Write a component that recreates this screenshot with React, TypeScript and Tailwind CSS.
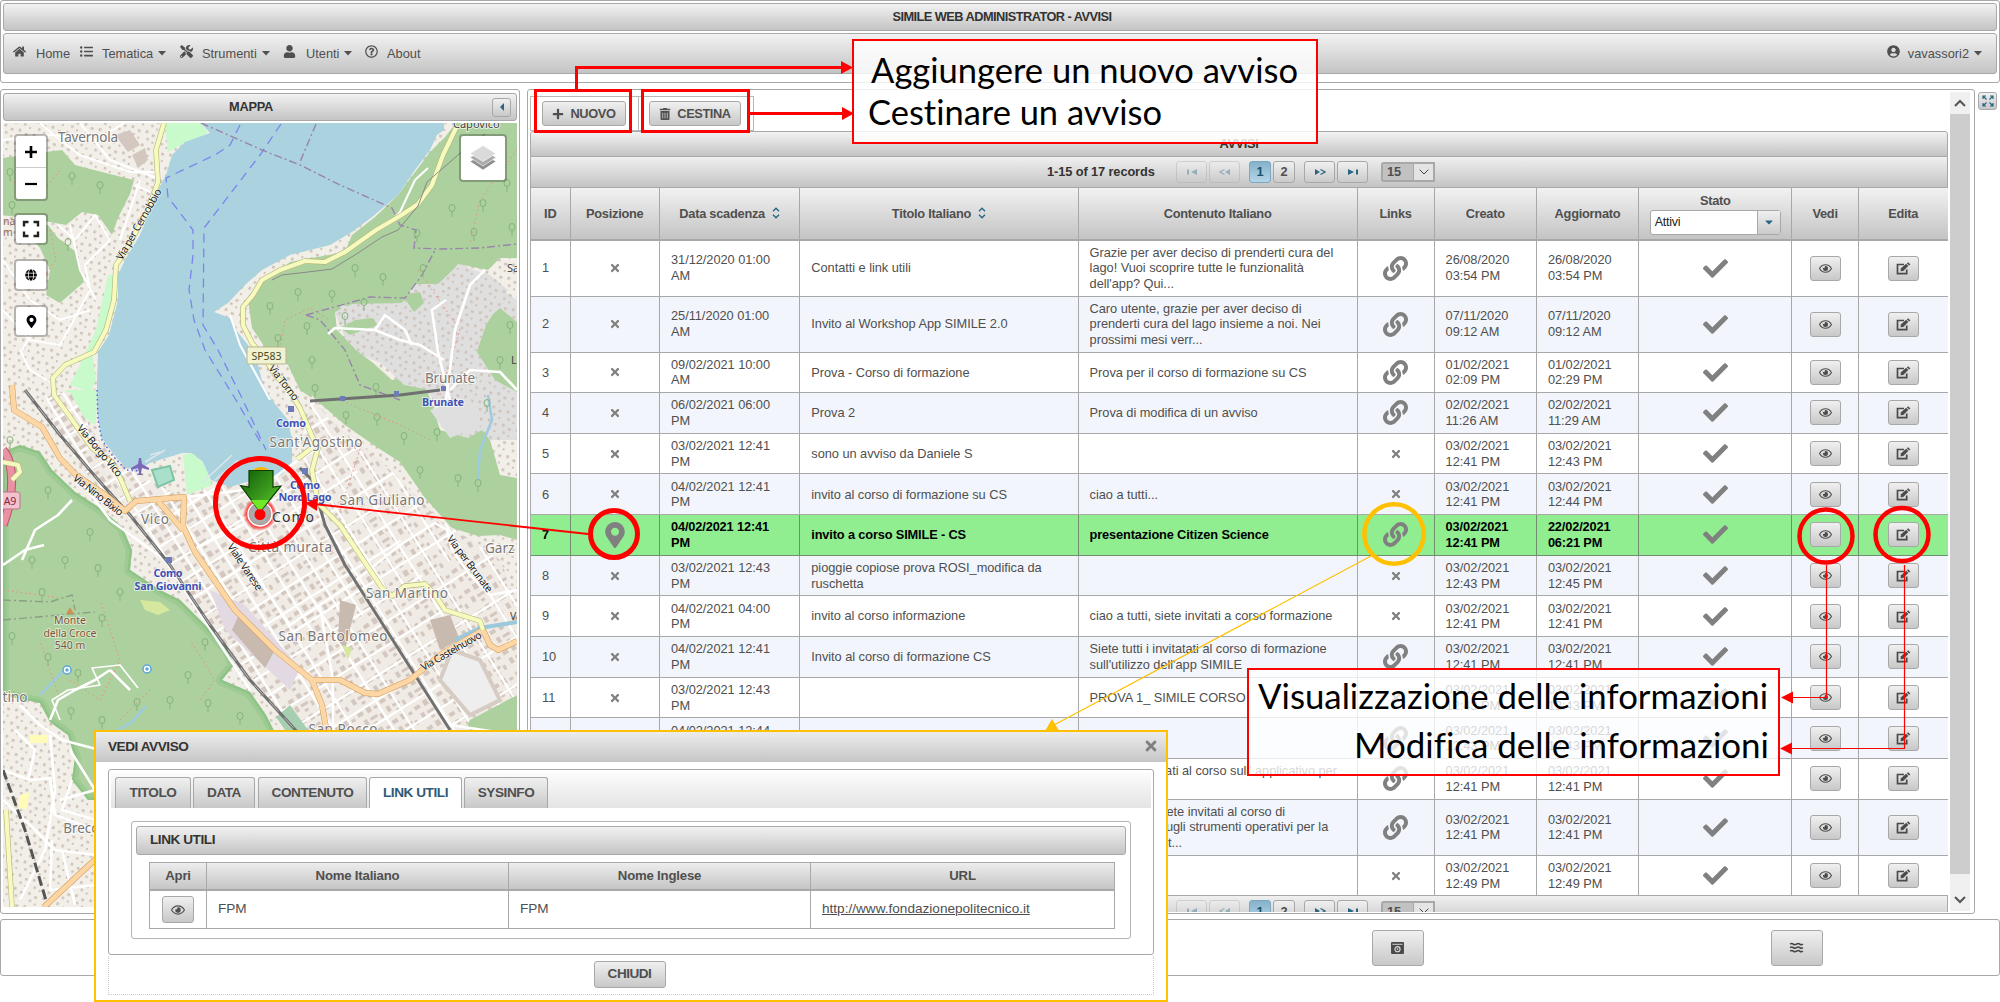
import React from "react";
import {
  FaHome, FaListUl, FaTools, FaUser, FaRegQuestionCircle, FaUserCircle, FaPlus, FaTrashAlt,
  FaLink, FaCheck, FaTimes, FaRegEye, FaMapMarkerAlt, FaCaretDown, FaGlobe,
} from "react-icons/fa";

const BAR = "border border-[#a8a8a8] bg-gradient-to-b from-[#f2f2f2] to-[#c4c4c4]";
const BTN = "border border-[#a8a8a8] bg-gradient-to-b from-[#f0f0f0] to-[#c8c8c8] rounded-[3px] flex items-center justify-center text-[#4f4f4f]";
const COLS = "grid grid-cols-[39.5px_89.5px_140.3px_278.3px_279px_77px_102.3px_102.2px_153.4px_66.2px_90px]";

type Row = {
  id: number; scad: string[]; tit?: string[]; cont?: string[]; link?: boolean;
  cre: string[]; agg: string[]; tall?: boolean; sel?: boolean;
};

const rows: Row[] = [
  { id: 1, scad: ["31/12/2020 01:00", "AM"], tit: ["Contatti e link utili"], cont: ["Grazie per aver deciso di prenderti cura del", "lago! Vuoi scoprire tutte le funzionalità", "dell'app? Qui..."], link: true, cre: ["26/08/2020", "03:54 PM"], agg: ["26/08/2020", "03:54 PM"], tall: true },
  { id: 2, scad: ["25/11/2020 01:00", "AM"], tit: ["Invito al Workshop App SIMILE 2.0"], cont: ["Caro utente, grazie per aver deciso di", "prenderti cura del lago insieme a noi. Nei", "prossimi mesi verr..."], link: true, cre: ["07/11/2020", "09:12 AM"], agg: ["07/11/2020", "09:12 AM"], tall: true },
  { id: 3, scad: ["09/02/2021 10:00", "AM"], tit: ["Prova - Corso di formazione"], cont: ["Prova per il corso di formazione su CS"], link: true, cre: ["01/02/2021", "02:09 PM"], agg: ["01/02/2021", "02:29 PM"] },
  { id: 4, scad: ["06/02/2021 06:00", "PM"], tit: ["Prova 2"], cont: ["Prova di modifica di un avviso"], link: true, cre: ["02/02/2021", "11:26 AM"], agg: ["02/02/2021", "11:29 AM"] },
  { id: 5, scad: ["03/02/2021 12:41", "PM"], tit: ["sono un avviso da Daniele S"], cre: ["03/02/2021", "12:41 PM"], agg: ["03/02/2021", "12:43 PM"] },
  { id: 6, scad: ["04/02/2021 12:41", "PM"], tit: ["invito al corso di formazione su CS"], cont: ["ciao a tutti..."], cre: ["03/02/2021", "12:41 PM"], agg: ["03/02/2021", "12:44 PM"] },
  { id: 7, scad: ["04/02/2021 12:41", "PM"], tit: ["invito a corso SIMILE - CS"], cont: ["presentazione Citizen Science"], link: true, cre: ["03/02/2021", "12:41 PM"], agg: ["22/02/2021", "06:21 PM"], sel: true },
  { id: 8, scad: ["03/02/2021 12:43", "PM"], tit: ["pioggie copiose prova ROSI_modifica da", "ruschetta"], cre: ["03/02/2021", "12:43 PM"], agg: ["03/02/2021", "12:45 PM"] },
  { id: 9, scad: ["04/02/2021 04:00", "PM"], tit: ["invito al corso informazione"], cont: ["ciao a tutti, siete invitati a corso formazione"], cre: ["03/02/2021", "12:41 PM"], agg: ["03/02/2021", "12:41 PM"] },
  { id: 10, scad: ["04/02/2021 12:41", "PM"], tit: ["Invito al corso di formazione CS"], cont: ["Siete tutti i invitatati al corso di formazione", "sull'utilizzo dell'app SIMILE"], link: true, cre: ["03/02/2021", "12:41 PM"], agg: ["03/02/2021", "12:41 PM"] },
  { id: 11, scad: ["03/02/2021 12:43", "PM"], cont: ["PROVA 1_ SIMILE CORSO"], cre: ["03/02/2021", "12:43 PM"], agg: ["03/02/2021", "12:43 PM"] },
  { id: 12, scad: ["04/02/2021 12:44", "PM"], link: true, cre: ["03/02/2021", "12:43 PM"], agg: ["03/02/2021", "12:43 PM"] },
  { id: 13, scad: ["04/02/2021 12:41", "PM"], cont: ["Siete già invitati al corso sull' applicativo per", "\u00a0"], link: true, cre: ["03/02/2021", "12:41 PM"], agg: ["03/02/2021", "12:41 PM"] },
  { id: 14, scad: ["04/02/2021 12:41", "PM"], cont: ["Ciao a tutti, siete invitati al corso di", "formazione, sugli strumenti operativi per la", "gestione dei st..."], link: true, cre: ["03/02/2021", "12:41 PM"], agg: ["03/02/2021", "12:41 PM"], tall: true },
  { id: 15, scad: ["04/02/2021 12:49", "PM"], cre: ["03/02/2021", "12:49 PM"], agg: ["03/02/2021", "12:49 PM"] },
];

function Lines({ t }: { t?: string[] }) {
  return <div className="whitespace-nowrap">{(t || []).map((l, i) => <div key={i}>{l}</div>)}</div>;
}

function Cell({ children, center, sel }: { children?: React.ReactNode; center?: boolean; sel?: boolean }) {
  return (
    <div className={"flex items-center border-b border-r overflow-hidden " + (sel ? "border-[#6f8f6f] " : "border-[#a8a8a8] ") + (center ? "justify-center" : "pl-[11px]")}>
      {children}
    </div>
  );
}

const X = () => <FaTimes className="text-[12px] text-[#808080]" />;

function EditIcon() {
  return (
    <svg width="15" height="13" viewBox="0 0 15 13">
      <path d="M8 2.500H1.500V11.700H10.700V7.500" fill="none" stroke="#4a4a4a" strokeWidth="1.700" />
      <path d="M4.500 9.300L5 6.300L10.200 1.800L12.300 4.100L7.200 8.900Z" fill="#4a4a4a" />
      <path d="M10.900 1.200L12.200 .2L14.300 2.400L13 3.500Z" fill="#4a4a4a" />
    </svg>
  );
}

function TableRow({ r, i }: { r: Row; i: number }) {
  const bg = r.sel ? "bg-[#90ee90] font-bold text-black tracking-[-0.150px] " : i % 2 ? "bg-[#f2f5fb] tracking-[-0.040px] " : "bg-white tracking-[-0.040px] ";
  return (
    <div className={COLS + " leading-[15.6px] " + bg + (r.tall ? "h-[56px]" : "h-[40.66px]")}>
      <Cell sel={r.sel}>{r.id}</Cell>
      <Cell center sel={r.sel}>{r.sel ? <FaMapMarkerAlt className="text-[26px] text-[#808080]" /> : <X />}</Cell>
      <Cell sel={r.sel}><Lines t={r.scad} /></Cell>
      <Cell sel={r.sel}><Lines t={r.tit} /></Cell>
      <Cell sel={r.sel}><Lines t={r.cont} /></Cell>
      <Cell center sel={r.sel}>{r.link ? <FaLink className="text-[25px] text-[#808080]" /> : <X />}</Cell>
      <Cell sel={r.sel}><Lines t={r.cre} /></Cell>
      <Cell sel={r.sel}><Lines t={r.agg} /></Cell>
      <Cell center sel={r.sel}><FaCheck className="text-[25px] text-[#808080]" /></Cell>
      <Cell center sel={r.sel}><div className={BTN + " h-[25px] w-[31px]"}><FaRegEye className="text-[13px]" /></div></Cell>
      <Cell center sel={r.sel}><div className={BTN + " h-[25px] w-[31px]"}><EditIcon /></div></Cell>
    </div>
  );
}

function Paginator() {
  const b = "flex h-[22px] items-center justify-center rounded-[3px] border border-[#a8a8a8] bg-gradient-to-b from-[#f0f0f0] to-[#cbcbcb] ";
  return (
    <div className="flex h-[31px] shrink-0 items-center border-x border-b border-[#a8a8a8] bg-gradient-to-b from-[#f0f0f0] to-[#c4c4c4] pl-[516px] font-bold text-[#4f4f4f]">
      <span className="w-[129px] whitespace-nowrap tracking-[-0.100px] text-[#333]">1-15 of 17 records</span>
      <div className={b + "w-[31px] opacity-40"}><svg width="12" height="8" viewBox="0 0 12 8"><path d="M1 1.500h2v5H1zM11 1v6L5 4z" fill="#2e6e8e" /></svg></div>
      <div className={b + "ml-[2px] w-[31px] opacity-40"}><svg width="12" height="8" viewBox="0 0 12 8"><path d="M11 1v6L6 4z" fill="#2e6e8e" /><path d="M5.500 1.500L1 4l4.500 2.500" fill="none" stroke="#2e6e8e" strokeWidth="1.200" /></svg></div>
      <div className="ml-[9px] flex h-[22px] w-[22px] items-center justify-center rounded-[3px] border border-[#7ba7bf] bg-gradient-to-b from-[#85b2cb] to-[#b4d5e7] text-[#1d4f6b]">1</div>
      <div className={b + "ml-[2px] w-[22px]"}>2</div>
      <div className={b + "ml-[9px] w-[31px]"}><svg width="12" height="8" viewBox="0 0 12 8"><path d="M1 1v6l5-3z" fill="#2a6582" /><path d="M6.500 1.500L11 4L6.500 6.500" fill="none" stroke="#2a6582" strokeWidth="1.200" /></svg></div>
      <div className={b + "ml-[2px] w-[31px]"}><svg width="12" height="8" viewBox="0 0 12 8"><path d="M9 1.500h2v5H9zM1 1v6l6-3z" fill="#2a6582" /></svg></div>
      <div className="ml-[13px] flex h-[20px] w-[54px] items-center rounded-l-[3px] border-2 border-[#a8a8a8] bg-[#c2c2c2] pl-[4px]">
        <span className="w-[26px]">15</span>
        <div className="flex h-[16px] w-[20px] items-center justify-center border-l border-[#a8a8a8] bg-[#e4e4e4]">
          <svg width="10" height="6" viewBox="0 0 10 6"><path d="M.7.7L5 5L9.300.7" fill="none" stroke="#444" /></svg>
        </div>
      </div>
    </div>
  );
}

function Sort() {
  return <svg className="ml-[7px]" width="8" height="12" viewBox="0 0 8 12"><path d="M1 4.300L4 1.300L7 4.300M1 7.700L4 10.700L7 7.700" fill="none" stroke="#2a6582" strokeWidth="1.400" /></svg>;
}

function HeaderRow() {
  const names = ["ID", "Posizione", "Data scadenza", "Titolo Italiano", "Contenuto Italiano", "Links", "Creato", "Aggiornato", "Stato", "Vedi", "Edita"];
  return (
    <div className={COLS + " h-[52.500px] shrink-0 bg-gradient-to-b from-[#f2f2f2] to-[#c2c2c2] font-bold tracking-[-0.250px] text-[#4f4f4f]"}>
      {names.map((n, i) => (
        <div key={n} className="flex flex-col items-center justify-center border-r border-b-2 border-[#a8a8a8]">
          <div className={"flex items-center whitespace-nowrap" + (n === "Stato" ? " h-[18px]" : "")}>{n}{(i === 2 || i === 3) && <Sort />}</div>
          {n === "Stato" && (
            <div className="flex h-[25px] w-[131px] rounded-[3px] border border-[#a8a8a8] bg-white font-normal text-[#222]">
              <span className="w-[106px] pl-[4px] pt-[2px] text-[12.500px]">Attivi</span>
              <span className="flex flex-1 items-center justify-center border-l border-[#a8a8a8] bg-gradient-to-b from-[#f0f0f0] to-[#cbcbcb]"><FaCaretDown className="text-[12px] text-[#2a6582]" /></span>
            </div>
          )}
        </div>
      ))}
    </div>
  );
}

const LAKE = "M201 123L210 133L185 142L172 155L166 175L158 190L152 205L140 235L126 258L118 275L118 300L109 335L98 352L97 382L97 410L101 437L112 452L126 468L138 470L150 463L182 453L192 453L203 462L211 480L230 487L247 482L282 475L292 462L292 440L288 420L272 400L263 385L258 365L248 345L236 330L230 318L214 312L228 303L246 284L262 270L290 255L330 245L352 232L372 217L398 195L415 170L430 150L437 135L444 130V123Z";
const FOREST = [
  "M3 158L45 152L62 150L75 165L98 171L134 180L130 194L118 218L112 235L98 215L82 212L66 225L50 222L3 215Z",
  "M22 226L48 225L58 238L76 252L84 282L60 303L46 295L50 270L40 248Z",
  "M430 152L445 137L456 123H517V258L500 258L488 270L458 264L440 285L415 284L402 303L352 304L335 312L337 330L356 350L372 362L392 380L420 375L430 398L440 430L468 438L482 430L490 440L500 475L517 478V540L500 535L478 536L452 528L425 498L400 462L378 448L345 425L322 405L300 390L288 365L270 355L252 328L248 300L262 283L290 262L345 252L352 235L375 217L398 195Z",
  "M480 325L500 308L517 322V392L495 380L477 352Z",
  "M3 452L20 445L40 452L52 470L75 492L100 508L122 527L132 550L130 570L160 590L180 600L205 625L228 650L234 665L222 680L250 692L266 715L276 735L290 760V800L88 800L72 780L75 758L68 735L50 722L40 703L3 695Z",
  "M466 720L490 700L517 695V760L480 760Z",
];
const PARK = ["M165 123H201L208 133L185 143L168 152Z", "M108 275L116 275L112 310L104 338L92 352L96 380L90 392L70 385L80 365L96 330Z", "M65 390H97L96 425L80 415Z", "M183 455L192 453L205 465L212 485L187 495Z", "M165 545L185 540L195 555L190 568L175 560Z", "M330 450L345 470L330 475Z"];
const CITY = "M97 440L112 455L135 472L180 497L210 488L260 482L298 458L312 395L330 420L380 460L410 490L440 520L500 560L517 600V695L470 720L440 760L320 760L270 700L200 612L150 540L100 490L60 440L45 395L70 392Z";
const YELLOW = [
  "M164 123L156 150L158 182L148 210L125 252L116 265L114 300L106 330L94 352L65 365L53 378L54 395L68 414L92 448L112 462L121 480L130 501",
  "M456 128L443 155L432 185L418 204L400 216L376 230L345 252L325 262L305 261L280 270L262 280L253 295L243 307L243 325L252 343L264 357L275 375L288 388L300 408L312 436L318 448L312 470L318 503L340 525L360 555L382 588L392 596L405 586L425 584L436 596L445 610L480 621L483 630",
  "M297 459L312 448", "M3 462L18 465L20 472L12 480",
  "M6 810L12 907",
];
const ORANGE = ["M12 385L14 410L42 427L60 458L76 475L104 494L125 511L136 501L184 497L183 526L195 552L235 610L275 650L312 680L340 680L365 693L378 694L410 680L440 655L483 630L490 645L498 650L517 641", "M312 680L322 705L328 740", "M158 501L183 530", "M44 907L100 855"];
const WHITE = ["M186 497L260 488L298 460", "M195 549L262 515", "M222 530L245 560L290 625L350 585L400 545L435 523L447 530L452 550L470 575L490 595L517 590", "M320 607L333 680V740", "M415 675L450 725L517 735", "M50 440L110 520L165 560L250 690", "M450 400L438 352L432 310L446 300M446 400L455 330L470 285L485 270M444 360L420 345L400 340L375 330L335 328L328 334M375 330L385 315L405 330L412 345", "M450 390L470 370L500 372L517 390", "M22 560L35 530L58 515L72 500", "M3 565L25 550L44 545", "M50 720L58 700L75 690L95 680L110 670M110 670L130 690", "M20 705L40 725L62 740L100 750M50 735L55 790L45 850L20 900M3 800L30 825L55 850L96 855M70 750L95 790L60 800", "M3 770L30 780L50 778L55 815L96 830M28 780L35 750L15 730M52 840L50 890L96 885M62 850L75 905M72 780L62 810L96 820"];
const RAIL = ["M25 390L60 435L100 482L130 515L170 565L210 625L250 680L300 735", "M300 468L312 480L325 525L345 565L380 620L415 675L450 730", "M310 401L400 395L440 390"];

const TREES = [[72, 176], [100, 185], [10, 172], [12, 205], [68, 242], [452, 208], [483, 203], [474, 232], [417, 233], [507, 183], [512, 227], [423, 268], [383, 277], [355, 268], [332, 294], [298, 292], [270, 306], [307, 326], [345, 316], [278, 338], [312, 360], [364, 302], [510, 325], [500, 360], [376, 387], [315, 388], [346, 415], [377, 417], [404, 436], [437, 432], [487, 403], [420, 470], [458, 478], [478, 483], [10, 440], [48, 490], [90, 532], [32, 560], [65, 560], [98, 568], [42, 592], [120, 592], [12, 636], [48, 657], [78, 673], [102, 618], [188, 675], [205, 642], [137, 702], [170, 700], [208, 703], [71, 711], [240, 716], [102, 720]];

const STREETS = Array.from({ length: 42 }, (_, i) => -360 + i * 17);

function LakeMap() {
  const lab = (x: number, y: number, t: string, w?: number) => (
    <text x={x} y={y} textAnchor="middle" fontSize="13.500" fill="#777" stroke="#fff" strokeWidth="2" strokeOpacity=".75" paintOrder="stroke" textLength={w}>{t}</text>
  );
  const blue = (x: number, y: number, t: string, w?: number) => (
    <text x={x} y={y} textAnchor="middle" fontSize="10.800" fontWeight="700" fill="#4150b5" stroke="#fff" strokeWidth="2" strokeOpacity=".6" paintOrder="stroke" textLength={w}>{t}</text>
  );
  const road = (x: number, y: number, a: number, t: string, w?: number) => (
    <text transform={`translate(${x} ${y}) rotate(${a})`} textAnchor="middle" fontSize="10.500" fill="#222" stroke="#fff" strokeWidth="1.500" strokeOpacity=".6" paintOrder="stroke" textLength={w}>{t}</text>
  );
  return (
    <svg width="514" height="784" viewBox="3 123 514 784" fontFamily="'Noto Sans', sans-serif" className="block">
      <defs>
        <pattern id="bld" width="26" height="24" patternUnits="userSpaceOnUse" patternTransform="rotate(-32)">
          <path d="M2 3h6v4H2zM12 2h5v6h-5zM20 5h4v3h-4zM4 12h4v6H4zM11 13h8v3h-8zM21 15h3v5h-3zM12 19h4v3h-4z" fill="#d3c7bf" />
        </pattern>
        <pattern id="sm" width="15" height="14" patternUnits="userSpaceOnUse" patternTransform="rotate(20)">
          <path d="M2 2h2.500v3H2zM9 4h3v2.500H9zM5 9h2.500v2.500H5zM11 11h2v2h-2z" fill="#cfc3ba" />
        </pattern>
        <clipPath id="city"><path d={CITY} /></clipPath>
        <clipPath id="southwest"><path d={FOREST[4]} /></clipPath>
        <radialGradient id="glow"><stop offset=".5" stopColor="#888" stopOpacity=".6" /><stop offset=".75" stopColor="#ff3030" /><stop offset="1" stopColor="#ff3030" stopOpacity="0" /></radialGradient>
        <linearGradient id="grn" x1="0" y1="0" x2="1" y2="1"><stop offset="0" stopColor="#0e5c06" /><stop offset=".6" stopColor="#3f9f1f" /><stop offset="1" stopColor="#5fe020" /></linearGradient>
      </defs>
      <rect x="3" y="123" width="514" height="784" fill="#f2efe9" />
      <rect x="3" y="123" width="514" height="784" fill="url(#sm)" />
      <path d="M330 300H420L460 262L517 300V440L460 440L420 380L350 350Z" fill="#e0dfdf" />
      <path d="M330 300H420L460 262L517 300V440L460 440L420 380L350 350Z" fill="url(#sm)" />
      {FOREST.map((d) => <path key={d} d={d} fill="#add19e" />)}
      <g clipPath="url(#southwest)" fill="none" stroke="#8fc487" strokeLinejoin="round">
        <path d={FOREST[4]} strokeWidth="12" strokeOpacity=".5" />
        <path d={FOREST[4]} strokeWidth="5" />
      </g>
      <path d="M340 304L352 308L368 318L392 306L402 303L416 284L438 284L458 265L490 275L508 290L486 325L474 360L452 398L430 390L404 385L380 362L372 340L345 330Z" fill="#e0dfdf" />
      <path d="M340 304L352 308L368 318L392 306L402 303L416 284L438 284L458 265L490 275L508 290L486 325L474 360L452 398L430 390L404 385L380 362L372 340L345 330Z" fill="url(#sm)" />
      <path d="M355 320L372 318L378 325L350 335L340 328Z M402 295L420 292L424 303L414 312Z" fill="#add19e" />
      {PARK.map((d) => <path key={d} d={d} fill="#c8facc" />)}
      <path d="M430 410L470 398L482 425L450 438Z" fill="#e0dfdf" />
      <g clipPath="url(#city)">
        <rect x="3" y="380" width="514" height="400" fill="#f0ebe4" />
        <rect x="3" y="380" width="514" height="400" fill="url(#bld)" />
        <g transform="translate(290 590) rotate(-32)" stroke="#fff" strokeWidth="2.200">
          {STREETS.map((v, i) => <g key={v}><path d={`M${v} -340V${i % 3 ? 340 : 60}`} /><path d={`M-360 ${v * 1.2}H${i % 2 ? 360 : 120}`} /></g>)}
        </g>
        <path d="M210 590L245 605L300 668L290 690L225 630Z" fill="#e3d9e3" />
        <path d="M240 612L275 650L265 668L232 630Z M250 600L282 640M340 600L356 605L345 650L338 640Z M430 620L450 615L460 640L440 650Z" fill="#c9bab0" />
        <path d="M452 650L480 660L500 700L470 715L440 680Z" fill="#eeeeee" stroke="#d6ccc4" strokeWidth="4" />
      </g>
      <path d="M115 135L130 130L140 145L128 152Z M132 155L145 148L148 160L138 168Z" fill="#d3c7bf" />
      <path d="M152 470L170 466L174 480L158 487Z" fill="#aae0cb" stroke="#7cc6a4" strokeWidth="2" />
      <path d="M276 717L290 705L308 730V740H292Z" fill="#a5cfb0" />
      <path d="M140 600L160 602L170 610L158 615L145 610Z M342 645L352 648L348 660Z" fill="#d6e8a0" />
      <path d="M30 735h18v8H30zM20 795l10 -3l-4 18l-8 -3z" fill="#fffbb8" />
      <path d={LAKE} fill="#aad3df" />
      <path d="M202 483L232 455M215 480L238 460M145 462L165 450M150 455L160 452" stroke="#dce6ea" strokeWidth="1.500" />
      <g fill="none" stroke="#7b85ee" strokeWidth="1.300" strokeDasharray="9 6">
        <path d="M240 125L230 145L215 155L166 178L168 197L193 230L193 255L189 290L194 320L205 350L236 400L262 445" />
        <path d="M281 124L260 155L204 228L203 325L218 350L242 398L266 450" />
      </g>
      <path d="M97 390L98 420L102 440L112 455L126 470L140 471" fill="none" stroke="#5a66e0" strokeWidth="1.500" strokeDasharray="1.500 3" />
      <g fill="none" stroke="#9a83ad" strokeWidth="1.400" strokeDasharray="8 3 2 3">
        <path d="M201 123L262 150L300 165L340 185L392 208L400 225L416 230L414 248L440 249L480 248L517 244M316 124L300 162" />
        <path d="M306 315L320 320L345 350L360 385L400 400M306 315L370 297L405 298L422 275L435 250" />
        <path d="M3 600L50 602L72 595L75 610M3 620L60 615L95 612" stroke="#8c9f86" />
      </g>
      <g fill="none" stroke="#f08a80" strokeWidth="1" strokeDasharray="1.500 3">
        <path d="M10 180L40 195L60 170M50 230L56 260L45 275M275 380L285 320L310 308L330 320M440 395L460 330L418 270M517 150L480 200L470 245M340 510L360 450L330 440M70 680L100 700L120 660L100 600M150 690L120 720M60 700L40 640M3 590L60 598M200 700L215 680L190 640M430 440L400 425L340 400" />
      </g>
      <path d="M488 395L492 420L480 450L478 480M118 730L132 722L146 706M40 695L66 668" fill="none" stroke="#9ccbe0" strokeWidth="2.500" />
      <path d="M455 640L480 628L517 622" fill="none" stroke="#9cc8dc" strokeWidth="4" />
      {TREES.map(([x, y]) => <path key={x + "-" + y} d={`M${x} ${y + 3}v6M${x - 3} ${y}a3 3.500 0 1 0 6 0a3 3.500 0 1 0 -6 0`} fill="none" stroke="#86b37a" strokeWidth="1" />)}
      <path d="M3 450C14 462 15 495 3 525" fill="none" stroke="#c0506b" strokeWidth="9" />
      <path d="M3 450C14 462 15 495 3 525" fill="none" stroke="#e892a2" strokeWidth="7" />
      <g fill="none" stroke="#fff" strokeWidth="2.600" strokeLinejoin="round">
        {WHITE.map((d) => <path key={d} d={d} />)}
        <path strokeWidth="2" d="M40 123L60 140L80 155L130 172L156 172M80 123L110 160L156 178M3 140L50 135L95 140L125 123M3 260L30 300L60 320L90 310M58 225L75 240L95 215L110 240L85 265L90 290L60 345L30 340L3 310M70 225L80 270L96 300M140 180L120 240M135 185L150 192M20 350L30 370L50 382M22 350L45 310M388 225L400 212L415 180L428 168M230 315L240 345L270 400" />
        <path strokeWidth="1.600" d="M60 720L52 700L68 690L100 685L92 668L120 665L138 688" />
      </g>
      <g fill="none" strokeLinejoin="round">
        {RAIL.map((d) => <path key={d} d={d} stroke="#707070" strokeWidth="3" />)}
        <path d={RAIL[0]} stroke="#bbb" strokeWidth="1" strokeDasharray="14 8" />
        <path d="M3 770L25 830L48 907" stroke="#555" strokeWidth="3" strokeDasharray="10 4" />
        {ORANGE.map((d) => <path key={d} d={d} stroke="#d09a55" strokeWidth="6" />)}
        {ORANGE.map((d) => <path key={d} d={d} stroke="#fcd6a4" strokeWidth="5" />)}
        {YELLOW.map((d) => <path key={d} d={d} stroke="#b5b678" strokeWidth="5.400" />)}
        {YELLOW.map((d) => <path key={d} d={d} stroke="#f7fabf" strokeWidth="4.200" />)}
      </g>
      <path d="M485 134L458 155L427 182L418 206L398 230L382 237L358 253L332 269L308 272L282 275L272 280" fill="none" stroke="#888" strokeWidth="1" />
      <g fill="#6d7bb8"><path d="M441 386h5v5h-5zM340 396h5v5h-5zM394 391h5v5h-5zM288 406h6v6h-6zM302 468h6v6h-6zM166 557h6v6h-6z" /></g>
      <path d="M139 458l2 0 1 6 7 4v2l-7-2-1 5 2 2h-6l2-2-1-5-7 2v-2l7-4z" fill="#7b68b8" />
      <path d="M70 607l4 7h-8z" fill="#d08f55" />
      <g fill="#fff" stroke="#5aa5d8" strokeWidth="1.500"><circle cx="67" cy="670" r="4" /><circle cx="147" cy="669" r="4" /><circle cx="67" cy="670" r="1" /><circle cx="147" cy="669" r="1" /></g>
      {lab(88, 142, "Tavernola", 60)}
      {lab(450, 383, "Brunate", 50)}
      {lab(316, 447, "Sant'Agostino", 93)}
      {lab(382, 505, "San Giuliano", 85)}
      {lab(155, 524, "Vico", 28)}
      {lab(290, 552, "Città murata", 84)}
      {lab(407, 598, "San Martino", 82)}
      {lab(333, 641, "San Bartolomeo", 109)}
      {lab(343, 734, "San Rocco", 69)}
      <text x="485" y="553" fontSize="13.500" fill="#777" stroke="#fff" strokeWidth="2" strokeOpacity=".75" paintOrder="stroke">Garz</text>
      {lab(15, 702, "tino")}
      {lab(86, 833, "Breccia")}
      <text x="453" y="128" fontSize="11" fill="#444" stroke="#fff" strokeWidth="2" strokeOpacity=".7" paintOrder="stroke">Capovico</text>
      <text x="507" y="272" fontSize="11" fill="#444">Sa</text>
      <text x="511" y="364" fontSize="11" fill="#444">La</text>
      <text x="510" y="620" fontSize="10.500" fill="#444">Va</text>
      <text x="3" y="225" fontSize="10.500" fill="#9a6a4a">na</text><text x="3" y="236" fontSize="10.500" fill="#9a6a4a">m</text>
      <g fontSize="10.500" fill="#7d5540" textAnchor="middle" stroke="#fff" strokeWidth="1.800" strokeOpacity=".5" paintOrder="stroke"><text x="70" y="624">Monte</text><text x="70" y="637" textLength="53">della Croce</text><text x="70" y="649">540 m</text></g>
      {blue(291, 427, "Como", 30)}{blue(305, 489, "Como", 30)}{blue(305, 501, "Nord Lago", 53)}
      {blue(168, 577, "Como", 29)}{blue(168, 590, "San Giovanni", 67)}{blue(443, 406, "Brunate", 42)}
      {road(142, 226, -60, "Via per Cernobbio", 80)}
      {road(281, 385, 52, "Via Torno", 42)}
      {road(97, 453, 50, "Via Borgo Vico", 64)}
      {road(96, 498, 38, "Via Nino Bixio", 60)}
      {road(242, 569, 56, "Viale Varese", 54)}
      {road(467, 566, 53, "Via per Brunate", 68)}
      {road(453, 654, -30, "Via Castelnuovo", 68)}
      <rect x="247" y="347" width="39" height="17" rx="1.500" fill="#f0f2d0" stroke="#b5b58a" /><text x="266.500" y="359.500" fontSize="10.500" fill="#4a4a20" textAnchor="middle">SP583</text>
      <rect x="0" y="492" width="20" height="17" rx="2" fill="#f3c3cd" stroke="#c0708a" /><text x="10" y="504.500" fontSize="10.500" fill="#8a2040" textAnchor="middle">A9</text>
      <circle cx="260" cy="514" r="17" fill="url(#glow)" />
      <circle cx="260" cy="514" r="12" fill="#aaa" fillOpacity=".75" stroke="#fff" strokeWidth="1.500" />
      <text x="293" y="522" textAnchor="middle" fontSize="14" fill="#333" stroke="#fff" strokeWidth="2" strokeOpacity=".6" paintOrder="stroke" textLength="42">Como</text>
      <ellipse cx="261" cy="473" rx="9" ry="6" fill="#ffb400" />
      <path d="M249 470.500H273V487L281 486L260 512L240.500 485.500L249 487Z" fill="url(#grn)" stroke="#0b3d05" strokeWidth="1.200" />
      <path d="M251 500H269L260 512Z" fill="#6fe826" />
      <circle cx="260" cy="514.500" r="5.500" fill="red" />
    </svg>
  );
}

const CTRL = "flex h-[32px] w-[34px] items-center justify-center rounded-[4px] border-2 border-black/25 bg-white bg-clip-padding text-black";

function Menu({ w, icon, label, caret, tx }: { w: string; icon: React.ReactNode; label: string; caret?: boolean; tx: string }) {
  return (
    <div className={"flex items-center " + w}>
      <span className={"-mt-[4px] text-[13px] " + tx}>{icon}</span>
      <span className="whitespace-nowrap">{label}</span>
      {caret && <svg className="ml-[5px]" width="8" height="5" viewBox="0 0 8 5"><path d="M0 0H8L4 4.500Z" fill="#4f4f4f" /></svg>}
    </div>
  );
}

function Tab({ w, on, children }: { w: string; on?: boolean; children: string }) {
  return (
    <div className={"flex h-[31px] items-center justify-center rounded-t-[3px] border border-b-0 border-[#a8a8a8] text-[13.600px] tracking-[-0.450px] font-bold " + w + (on ? " bg-white text-[#2e5a77]" : " bg-gradient-to-b from-[#f0f0f0] to-[#c8c8c8] text-[#4f4f4f]")}>{children}</div>
  );
}

function Dialog() {
  const th = "flex items-center justify-center border-r border-[#a8a8a8]";
  return (
    <div className="absolute left-[94px] top-[730px] h-[272px] w-[1074px] border-2 border-[#ffc000] bg-white text-[13.600px]">
      <div className="flex h-[30px] items-center justify-between bg-gradient-to-b from-[#ececec] to-[#c6c6c6] pl-[12px] pr-[7px] font-bold text-[#333]">
        <span className="tracking-[-0.450px]">VEDI AVVISO</span>
        <FaTimes className="-mt-[2px] text-[16px] text-[#808080]" />
      </div>
      <div className="ml-[12px] mt-[7px] h-[186px] w-[1046px] rounded-[3px] border border-[#a8a8a8] p-[2px]">
        <div className="flex h-[36px] items-end bg-gradient-to-b from-[#fcfcfc] to-[#e4e4e4] pl-[4px]">
          <Tab w="w-[76px]">TITOLO</Tab>
          <Tab w="ml-[2px] w-[62px]">DATA</Tab>
          <Tab w="ml-[3px] w-[109px]">CONTENUTO</Tab>
          <Tab w="ml-[2px] w-[93px]" on>LINK UTILI</Tab>
          <Tab w="ml-[2px] w-[84px]">SYSINFO</Tab>
        </div>
        <div className="ml-[20px] mt-[13px] h-[118px] w-[1000px] rounded-[3px] border border-[#b4b4b4] p-[4px]">
          <div className={BAR + " flex h-[29px] items-center rounded-[3px] pl-[13px] font-bold tracking-[-0.450px] text-[#333]"}>LINK UTILI</div>
          <div className="ml-[13px] mt-[7px] w-[966px] border border-r-0 border-[#a8a8a8]">
            <div className="grid h-[28px] grid-cols-[57px_302px_302px_304px] border-b-2 border-[#a8a8a8] bg-gradient-to-b from-[#ededed] to-[#c6c6c6] text-[13.200px] font-bold tracking-[-0.200px] text-[#4f4f4f]">
              <div className={th}>Apri</div><div className={th}>Nome Italiano</div><div className={th}>Nome Inglese</div><div className={th}>URL</div>
            </div>
            <div className="grid h-[37px] grid-cols-[57px_302px_302px_304px] text-[13.600px]">
              <div className={th}><div className={BTN + " h-[27px] w-[32px]"}><FaRegEye className="text-[14px]" /></div></div>
              <div className={th + " !justify-start pl-[11px]"}>FPM</div>
              <div className={th + " !justify-start pl-[11px]"}>FPM</div>
              <div className={th + " !justify-start pl-[11px] underline"}>http://www.fondazionepolitecnico.it</div>
            </div>
          </div>
        </div>
      </div>
      <div className="ml-[12px] mt-[1px] flex h-[39px] w-[1046px] justify-center border border-t-0 border-dotted border-[#ccc] pr-[3px] pt-[5px]">
        <div className={BTN + " h-[27px] w-[72px] font-bold tracking-[-0.500px]"}>CHIUDI</div>
      </div>
    </div>
  );
}

function Annotations() {
  return (
    <svg className="pointer-events-none absolute left-0 top-0" width="2000" height="1002" viewBox="0 0 2000 1002" fill="none" fontFamily="Lato, 'Open Sans', sans-serif">
      <g stroke="red">
        <rect x="535.500" y="90.500" width="95" height="41" strokeWidth="3" />
        <rect x="642.500" y="90.500" width="106" height="41" strokeWidth="3" />
        <path d="M576.500 90V67.500H844M750 113.500H844" strokeWidth="3" />
        <circle cx="260" cy="503" r="44.500" strokeWidth="5" />
        <circle cx="614" cy="534" r="23.500" strokeWidth="5" />
        <circle cx="1826" cy="536" r="26.500" strokeWidth="4.500" />
        <circle cx="1902" cy="534.500" r="26.500" strokeWidth="4.500" />
        <path d="M588 534L314 504" strokeWidth="1.800" />
        <path d="M1826.500 565V697.500H1790M1904.500 565V748.500H1790" strokeWidth="1.200" />
      </g>
      <path d="M853 67.500L841 61V74ZM854 113.500L842 107V120ZM305 503L318 498L317 511ZM1781 697.500L1793 691.500V703.500ZM1780 748.500L1792 742.500V754.500Z" fill="red" />
      <circle cx="1394" cy="534" r="29.700" stroke="#ffc000" strokeWidth="4.500" />
      <path d="M1371 556L1054 725" stroke="#ffc000" strokeWidth="1.200" />
      <path d="M1045 731L1052 719L1058.500 730Z" fill="#ffc000" />
      <rect x="853" y="40" width="464" height="103" strokeWidth="2" stroke="red" fill="#fff" fillOpacity=".82" />
      <rect x="1248" y="669" width="531" height="106" strokeWidth="2" stroke="red" fill="#fff" fillOpacity=".77" />
      <g fill="#000" fontSize="34.500" className="[font-variant-ligatures:none]">
        <text x="871" y="82.500" textLength="427" lengthAdjust="spacingAndGlyphs">Aggiungere un nuovo avviso</text>
        <text x="868" y="124.500" textLength="294" lengthAdjust="spacingAndGlyphs">Cestinare un avviso</text>
        <text x="1258" y="708.500" textLength="510" lengthAdjust="spacingAndGlyphs">Visualizzazione delle informazioni</text>
        <text x="1354" y="757.500" textLength="415" lengthAdjust="spacingAndGlyphs">Modifica delle informazioni</text>
      </g>
    </svg>
  );
}

export default function App() {
  return (
    <div className="relative h-[1002px] w-[2000px] overflow-hidden bg-white font-['Liberation_Sans',Arial,sans-serif] text-[12.800px] text-[#4f4f4f]">
      <div className="h-[83px] rounded-[3px] border border-[#a8a8a8] px-[2px] pt-[2px]">
        <div className={BAR + " flex h-[28px] items-center justify-center rounded-[3px] text-[12.800px] font-bold tracking-[-0.550px] text-[#333]"}><span className="pl-[4px]">SIMILE WEB ADMINISTRATOR - AVVISI</span></div>
        <div className={BAR + " mt-[2px] flex h-[41px] items-center justify-between rounded-[3px] pl-[9px] pr-[14px]"}>
          <div className="flex">
            <Menu w="w-[67px]" tx="w-[23px]" icon={<FaHome />} label="Home" />
            <Menu w="w-[100px]" tx="w-[22px]" icon={<FaListUl />} label="Tematica" caret />
            <Menu w="w-[103px]" tx="w-[22px]" icon={<FaTools />} label="Strumenti" caret />
            <Menu w="w-[82px]" tx="w-[23px]" icon={<FaUser />} label="Utenti" caret />
            <Menu w="w-[60px]" tx="w-[22px]" icon={<FaRegQuestionCircle />} label="About" />
          </div>
          <Menu w="" tx="w-[21px]" icon={<FaUserCircle />} label="vavassori2" caret />
        </div>
      </div>

      <div className="mt-[6px] flex h-[825px]">
        <div className="w-[520px] rounded-[3px] border border-[#a8a8a8] px-[2px] pt-[3px]">
          <div className={BAR + " flex h-[28px] items-center rounded-[3px] pr-[5px] font-bold text-[#333]"}>
            <span className="flex-1 pl-[6px] text-center tracking-[-0.300px]">MAPPA</span>
            <div className={BTN + " h-[19px] w-[19px]"}><svg width="6" height="8" viewBox="0 0 6 8"><path d="M5 0v8L1 4z" fill="#2a6582" /></svg></div>
          </div>
          <div className="relative mt-[2px] h-[784px] w-[514px] overflow-hidden">
            <LakeMap />
            <div className="absolute left-[11px] top-[11px] flex flex-col">
              <div className="w-[34px] rounded-[4px] border-2 border-black/25 bg-white bg-clip-padding text-black">
                <div className="flex h-[32px] items-center justify-center border-b border-[#ccc]"><svg width="14" height="14"><path d="M7 1v12M1 7h12" stroke="#000" strokeWidth="2.600" /></svg></div>
                <div className="flex h-[31px] items-center justify-center"><svg width="14" height="14"><path d="M1 7h12" stroke="#000" strokeWidth="2.200" /></svg></div>
              </div>
              <div className={CTRL + " mt-[12px]"}><svg width="18" height="18" viewBox="0 0 18 18"><path d="M2 6.500V2h4.500M11.500 2H16v4.500M16 11.500V16h-4.500M6.500 16H2v-4.500" fill="none" stroke="#222" strokeWidth="2.400" /></svg></div>
              <div className={CTRL + " mt-[14px]"}><FaGlobe className="text-[12px]" /></div>
              <div className={CTRL + " mt-[14px]"}><FaMapMarkerAlt className="text-[13px]" /></div>
            </div>
            <div className="absolute right-[10px] top-[11px] flex h-[48px] w-[48px] items-center justify-center rounded-[4px] border-2 border-black/25 bg-white bg-clip-padding">
              <svg width="28" height="28" viewBox="0 0 28 28"><path d="M1 17.500L14 10L27 17.500L14 26Z" fill="#8e8e8e" stroke="#fff" strokeWidth=".6" /><path d="M1 13.500L14 6L27 13.500L14 22Z" fill="#aaa" stroke="#fff" strokeWidth=".6" /><path d="M1 9.500L14 1.500L27 9.500L14 17.500Z" fill="#dadada" stroke="#fff" strokeWidth=".6" /></svg>
            </div>
          </div>
        </div>

        <div className="ml-[7px] flex w-[1448px] rounded-[3px] border border-[#a8a8a8] pl-[2px]">
          <div className="flex h-[822px] w-[1418px] flex-col overflow-hidden">
            <div className="mt-[6px] flex h-[35px] shrink-0">
              <div className="flex w-[109px] items-center border border-[#b8b8b8] pl-[11px]"><div className={BTN + " h-[25px] w-[84px] font-bold tracking-[-0.350px]"}><FaPlus className="mr-[6px] text-[12px]" />NUOVO</div></div>
              <div className="flex w-[115px] items-center border border-l-0 border-[#b8b8b8] pl-[10px]"><div className={BTN + " h-[25px] w-[92px] font-bold tracking-[-0.400px]"}><FaTrashAlt className="mr-[6px] text-[12px]" />CESTINA</div></div>
            </div>
            <div className={BAR + " flex h-[26px] shrink-0 items-center justify-center rounded-t-[3px] font-bold tracking-[-0.300px] text-[#333]"}>AVVISI</div>
            <Paginator />
            <div className="shrink-0 border-l border-[#a8a8a8]">
              <HeaderRow />
              {rows.map((r, i) => <TableRow key={r.id} r={r} i={i} />)}
            </div>
            <Paginator />
          </div>
          <div className="ml-[2px] mt-[2px] flex h-[819px] w-[20px] flex-col bg-[#cdcdcd]">
            <div className="flex h-[22px] items-center justify-center bg-[#f0f0f0]"><svg width="12" height="8"><path d="M1 7L6 2L11 7" fill="none" stroke="#555" strokeWidth="2" /></svg></div>
            <div className="flex-1" />
            <div className="flex h-[37px] items-center justify-center bg-[#f0f0f0] pt-[14px]"><svg width="12" height="8"><path d="M1 1L6 6L11 1" fill="none" stroke="#555" strokeWidth="2" /></svg></div>
          </div>
        </div>
        <div className={BTN + " ml-[3px] mt-[3px] h-[18px] w-[19px]"}>
          <svg width="12" height="12" viewBox="0 0 12 12" fill="none" stroke="#2a6582" strokeWidth="1.200"><path d="M1 4V1h3M8 1h3v3M11 8v3H8M4 11H1V8M1 1l3.500 3.500M11 1L7.500 4.500M11 11L7.500 7.500M1 11l3.500-3.500" /></svg>
        </div>
      </div>

      <div className="mt-[5px] grid h-[57px] grid-cols-5 items-center rounded-[3px] border border-[#a8a8a8] pr-[3px]">
        <div className="col-start-4 flex justify-center"><div className={BTN + " h-[36px] w-[52px]"}>
          <svg width="13" height="12" viewBox="0 0 14 13"><path d="M1 0h12a1 1 0 0 1 1 1v11a1 1 0 0 1-1 1H1a1 1 0 0 1-1-1V1a1 1 0 0 1 1-1z" fill="#4a4a4a" /><path d="M1.500 2.500h11" stroke="#ddd" /><circle cx="7" cy="7.800" r="2.800" fill="none" stroke="#ddd" strokeWidth="1.200" /><circle cx="7" cy="7.800" r=".9" fill="#ddd" /></svg>
        </div></div>
        <div className="flex justify-center"><div className={BTN + " h-[36px] w-[52px]"}>
          <svg width="15" height="11" viewBox="0 0 15 12" fill="none" stroke="#444" strokeWidth="1.700"><path d="M.5 2.300q1.800-1.400 3.500 0t3.500 0t3.500 0t3.500 0M.5 6.100q1.800-1.400 3.500 0t3.500 0t3.500 0t3.500 0M.5 9.900q1.800-1.400 3.500 0t3.500 0t3.500 0t3.500 0" /></svg>
        </div></div>
      </div>

      <Dialog />
      <Annotations />
    </div>
  );
}
